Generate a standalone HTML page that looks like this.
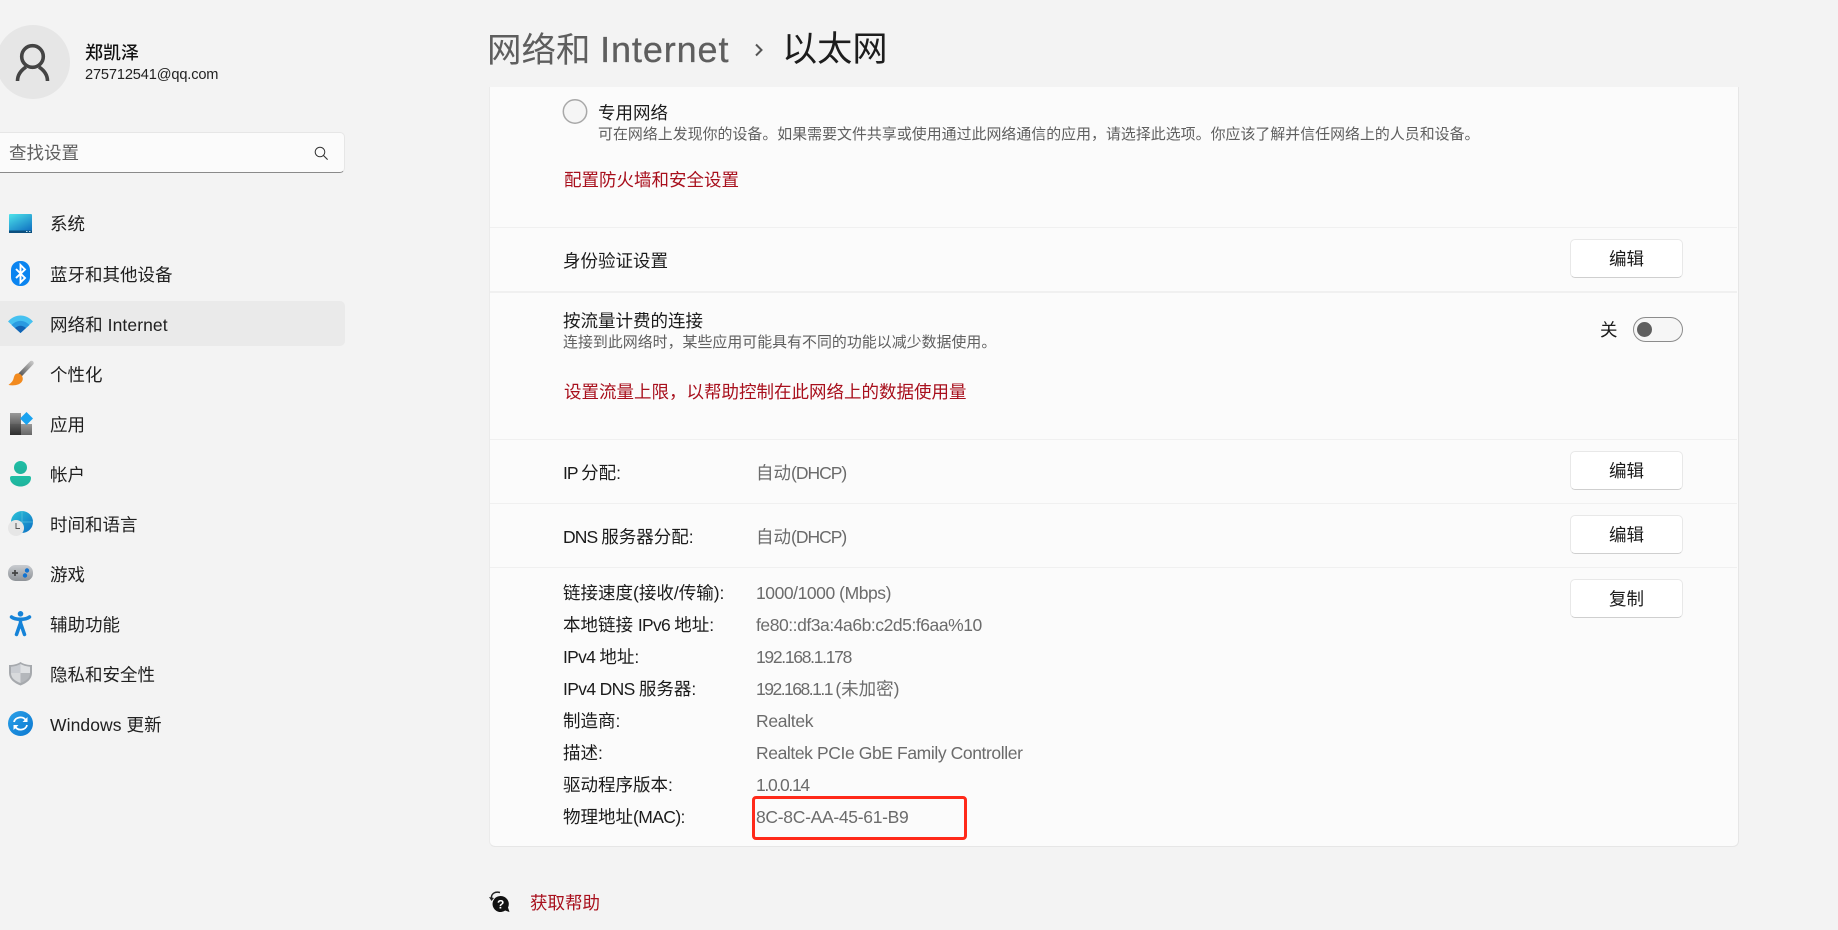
<!DOCTYPE html>
<html lang="zh-CN">
<head>
<meta charset="utf-8">
<title>设置</title>
<style>
html,body{margin:0;padding:0;width:1838px;height:930px;overflow:hidden;background:#f3f3f3;}
body{position:relative;font-family:"Liberation Sans","Noto Sans CJK SC",sans-serif;color:#1b1b1b;}
.t{position:absolute;white-space:nowrap;line-height:24px;height:24px;font-size:17.5px;}
.d{font-size:14.9px;letter-spacing:.05px;color:#5f5f5f;}
.v{color:#6b6b6b;}
.l{color:#a80f1c;}
.n{left:50px;color:#202020;}
.b{position:absolute;left:1570px;width:111px;height:37px;background:#fff;border:1px solid #e8e8e8;border-bottom-color:#cfcfcf;border-radius:5px;text-align:center;line-height:39px;font-size:17.5px;color:#1b1b1b;}
.hr{position:absolute;left:490px;width:1247px;height:1px;background:#f0f0f0;}
svg{position:absolute;overflow:visible;}
</style>
</head>
<body>
<!-- avatar -->
<div style="position:absolute;left:-4px;top:25px;width:74px;height:74px;border-radius:50%;background:#e6e6e6;"></div>
<svg style="left:0;top:0" width="70" height="100"><circle cx="32.500" cy="56.500" r="10.800" fill="none" stroke="#444" stroke-width="3.600"/><path d="M17.500 81C17.500 74 21.500 70 26 67M47.500 81C47.500 74 43.500 70 39 67" fill="none" stroke="#444" stroke-width="3.600"/></svg>
<div class="t" style="left:85px;top:41px;font-size:18px;font-weight:500;color:#111;">郑凯泽</div>
<div class="t" style="left:85px;top:63px;font-size:14.6px;letter-spacing:-.15px;color:#222;">275712541@qq.com</div>

<!-- search -->
<div style="position:absolute;left:-6px;top:132px;width:349px;height:39px;background:#fbfbfb;border:1px solid #e6e6e6;border-bottom:1.5px solid #8a8a8a;border-radius:5px;"></div>
<div class="t" style="left:9px;top:141px;color:#5f5f5f;">查找设置</div>
<svg style="left:314px;top:146px" width="16" height="16"><circle cx="6" cy="6" r="4.800" fill="none" stroke="#333" stroke-width="1"/><path d="M9.600 9.600l4 4" stroke="#333" stroke-width="1.100"/></svg>

<!-- nav -->
<div style="position:absolute;left:-6px;top:301px;width:351px;height:45px;background:#eaeaea;border-radius:5px;"></div>
<svg width="0" height="0" style="left:0;top:0"><defs>
<linearGradient id="g1" x1="0" y1="0" x2=".6" y2="1"><stop offset="0" stop-color="#4de3ea"/><stop offset="1" stop-color="#1478c4"/></linearGradient>
<linearGradient id="g2" x1="0" y1="0" x2="0" y2="1"><stop offset="0" stop-color="#1fbfa5"/><stop offset="1" stop-color="#1fb29c"/></linearGradient>
<linearGradient id="g3" x1="0" y1="0" x2="1" y2="1"><stop offset="0" stop-color="#2bc4d8"/><stop offset="1" stop-color="#0d6fc4"/></linearGradient>
<linearGradient id="g4" x1="0" y1="0" x2="1" y2="1"><stop offset="0" stop-color="#2aa0e8"/><stop offset="1" stop-color="#0c78d0"/></linearGradient>
<linearGradient id="g5" gradientUnits="userSpaceOnUse" x1="11" y1="15" x2="24" y2="1"><stop offset="0" stop-color="#4f4f4f"/><stop offset="1" stop-color="#c4c4c4"/></linearGradient>
<linearGradient id="g6" x1="0" y1="0" x2="0" y2="1"><stop offset="0" stop-color="#c9ccd0"/><stop offset="1" stop-color="#8e9297"/></linearGradient>
<linearGradient id="g7" x1="0" y1="0" x2="0" y2="1"><stop offset="0" stop-color="#9a9a9a"/><stop offset="1" stop-color="#666"/></linearGradient>
<linearGradient id="g8" x1="0" y1="0" x2="0" y2="1"><stop offset="0" stop-color="#5c5c5c"/><stop offset="1" stop-color="#2e2e2e"/></linearGradient>
</defs></svg>

<svg style="left:9px;top:214px" width="24" height="20"><rect width="23" height="19" rx="1" fill="url(#g1)"/><rect y="16.500" width="23" height="2.500" fill="#0c4f7e"/><rect x="17" y="17" width="1.500" height="1" fill="#bde"/><rect x="20" y="17" width="1.500" height="1" fill="#bde"/></svg>
<div class="t n" style="top:212px;">系统</div>

<svg style="left:11px;top:261px" width="20" height="26"><rect width="19" height="25" rx="9" fill="#0a84f0"/><path d="M5 8l9 9-4.500 4.500V4L14 8.500 5 17" fill="none" stroke="#fff" stroke-width="1.900"/></svg>
<div class="t n" style="top:263px;">蓝牙和其他设备</div>

<svg style="left:8px;top:315px" width="26" height="19"><path d="M0 6.500C7-1.500 18-1.500 25 6.500L12.500 18z" fill="#46c1f0"/><path d="M3.500 10C9 4.500 16 4.500 21.500 10L12.500 18z" fill="#2a9ae0"/><path d="M7 13c3.500-3 7.500-3 11 0L12.500 18z" fill="#1264b4"/></svg>
<div class="t n" style="top:313px;letter-spacing:.08px;">网络和 Internet</div>

<svg style="left:8px;top:361px" width="26" height="26"><path d="M23.500 2L12 14" stroke="url(#g5)" stroke-width="4.500" stroke-linecap="round" fill="none"/><path d="M10 12.500c-4.500 0-3.500 4.500-5.500 7.500-1 1.500-3 3-4 4 6 1 12 0 14-4.500 1.200-3.500-1.500-7-4.500-7z" fill="#f28a1e"/></svg>
<div class="t n" style="top:363px;">个性化</div>

<svg style="left:10px;top:412px" width="24" height="24"><rect y="1" width="11" height="11" fill="url(#g7)"/><rect y="12" width="11" height="11" fill="url(#g8)"/><rect x="11" y="12" width="11" height="11" fill="url(#g7)"/><path d="M16.500 0l6.500 6.500-6.500 6.500-6.500-6.500z" fill="#1aa3f0"/></svg>
<div class="t n" style="top:413px;">应用</div>

<svg style="left:10px;top:461px" width="22" height="26"><circle cx="10.500" cy="6.500" r="6.500" fill="url(#g2)"/><path d="M2 15h17a2 2 0 0 1 2 2c0 5-5 8.500-10.500 8.500S0 22 0 17a2 2 0 0 1 2-2z" fill="url(#g2)"/></svg>
<div class="t n" style="top:463px;">帐户</div>

<svg style="left:8px;top:511px" width="26" height="26"><circle cx="14" cy="11" r="11" fill="url(#g3)"/><path d="M3 11h22M14 0v22" stroke="#7fd6e8" stroke-width=".7" opacity=".6"/><circle cx="8" cy="17" r="8" fill="#e6e6e6"/><path d="M8 12v5.500h4" fill="none" stroke="#555" stroke-width="1"/></svg>
<div class="t n" style="top:513px;">时间和语言</div>

<svg style="left:8px;top:565px" width="26" height="17"><rect width="25" height="16" rx="7.500" fill="url(#g6)"/><path d="M4 8h6M7 5v6" stroke="#444" stroke-width="1.700"/><circle cx="19" cy="5.500" r="2.200" fill="#1273d0"/><circle cx="17" cy="10.500" r="2.200" fill="#1273d0"/></svg>
<div class="t n" style="top:563px;">游戏</div>

<svg style="left:10px;top:611px" width="22" height="26"><circle cx="10.500" cy="2.800" r="2.800" fill="#1583d8"/><path d="M1.500 6C5 9 16 9 19.500 6M10.500 8.500v4M10.500 12l-4 11.500M10.500 12l4 11.500" fill="none" stroke="#1583d8" stroke-width="3.500" stroke-linecap="round"/></svg>
<div class="t n" style="top:613px;">辅助功能</div>

<svg style="left:9px;top:662px" width="24" height="24"><path d="M11.500 0c3 2 7 3 11.500 3v8c0 6-5 10-11.500 12.500C5 21 0 17 0 11V3c4.500 0 8.500-1 11.500-3z" fill="#a6a9ad"/><path d="M11.500 2C9 3.500 5.500 4.500 2 4.700V11h9.500z" fill="#c9ccd1"/><path d="M11.500 2c2.500 1.500 6 2.500 9.500 2.700V11h-9.500z" fill="#dfe1e3"/><path d="M2 11h9.500v10C6 19 2 16 2 11z" fill="#d8dadc"/><path d="M21 11h-9.500v10c5.500-2 9.500-5 9.500-10z" fill="#b4b7bb"/></svg>
<div class="t n" style="top:663px;">隐私和安全性</div>

<svg style="left:8px;top:711px" width="26" height="26"><circle cx="12.500" cy="12.500" r="12.500" fill="url(#g4)"/><path d="M6 11c1-5 9-6.500 12-1.500M19 14c-1 5-9 6.500-12 1.500" fill="none" stroke="#fff" stroke-width="1.800"/><path d="M19.500 6v5h-5zM5.500 19v-5h5z" fill="#fff"/></svg>
<div class="t n" style="top:713px;letter-spacing:.08px;">Windows 更新</div>

<!-- title -->
<div class="t" style="left:487px;top:25px;height:50px;line-height:50px;font-size:34.5px;color:#5e5e5e;">网络和 <span style="font-size:36px;letter-spacing:.9px;-webkit-text-stroke:.3px #5e5e5e;">Internet</span></div>
<svg style="left:754px;top:43px" width="10" height="14"><path d="M2 1.500l5.500 5.500L2 12.500" fill="none" stroke="#555" stroke-width="2"/></svg>
<div class="t" style="left:782px;top:25px;height:50px;line-height:50px;font-size:35.2px;color:#1d1d1d;">以太网</div>

<!-- card -->
<div style="position:absolute;left:489px;top:87px;width:1248px;height:759px;background:#fbfbfb;border-left:1px solid #ebebeb;border-right:1px solid #e6e6e6;border-bottom:1px solid #e6e6e6;border-radius:0 0 6px 6px;"></div>
<div class="hr" style="top:227px;"></div>
<div class="hr" style="top:291px;height:2px;"></div>
<div class="hr" style="top:439px;"></div>
<div class="hr" style="top:503px;"></div>
<div class="hr" style="top:567px;"></div>

<svg style="left:563px;top:99px" width="26" height="26"><circle cx="12" cy="12.500" r="11.700" fill="#f5f5f5" stroke="#a8a8a8" stroke-width="1.500"/></svg>
<div class="t" style="left:598px;top:101px;">专用网络</div>
<div class="t d" style="left:598px;top:123px;">可在网络上发现你的设备。如果需要文件共享或使用通过此网络通信的应用，请选择此选项。你应该了解并信任网络上的人员和设备。</div>
<div class="t l" style="left:564px;top:168px;">配置防火墙和安全设置</div>

<div class="t" style="left:563px;top:249px;">身份验证设置</div>
<div class="b" style="top:239px;">编辑</div>

<div class="t" style="left:563px;top:309px;">按流量计费的连接</div>
<div class="t d" style="left:563px;top:331px;">连接到此网络时，某些应用可能具有不同的功能以减少数据使用。</div>
<div class="t" style="left:1600px;top:318px;">关</div>
<div style="position:absolute;left:1633px;top:317px;width:48px;height:23px;border:1px solid #8c8c8c;border-radius:13px;background:#f6f6f6;"></div>
<div style="position:absolute;left:1637px;top:322px;width:15px;height:15px;border-radius:50%;background:#5f5f5f;"></div>
<div class="t l" style="left:564px;top:380px;">设置流量上限，以帮助控制在此网络上的数据使用量</div>

<div class="t" style="left:563px;top:461px;"><span style="letter-spacing:-1px">IP </span>分配:</div>
<div class="t v" style="left:756px;top:461px;">自动<span style="letter-spacing:-1px">(DHCP)</span></div>
<div class="b" style="top:451px;">编辑</div>

<div class="t" style="left:563px;top:525px;"><span style="letter-spacing:-.9px">DNS </span>服务器分配:</div>
<div class="t v" style="left:756px;top:525px;">自动<span style="letter-spacing:-1px">(DHCP)</span></div>
<div class="b" style="top:515px;">编辑</div>
<div class="b" style="top:579px;">复制</div>

<div class="t" style="left:563px;top:581px;">链接速度(接收/传输):</div>
<div class="t v" style="left:756px;top:581px;letter-spacing:-.44px;">1000/1000 (Mbps)</div>
<div class="t" style="left:563px;top:613px;">本地链接 <span style="letter-spacing:-.7px">IPv6 </span>地址:</div>
<div class="t v" style="left:756px;top:613px;letter-spacing:-.45px;">fe80::df3a:4a6b:c2d5:f6aa%10</div>
<div class="t" style="left:563px;top:645px;"><span style="letter-spacing:-.7px">IPv4 </span>地址:</div>
<div class="t v" style="left:756px;top:645px;letter-spacing:-1.300px;">192.168.1.178</div>
<div class="t" style="left:563px;top:677px;"><span style="letter-spacing:-.65px">IPv4 DNS </span>服务器:</div>
<div class="t v" style="left:756px;top:677px;"><span style="letter-spacing:-1.500px">192.168.1.1 </span>(未加密)</div>
<div class="t" style="left:563px;top:709px;">制造商:</div>
<div class="t v" style="left:756px;top:709px;letter-spacing:-.3px;">Realtek</div>
<div class="t" style="left:563px;top:741px;">描述:</div>
<div class="t v" style="left:756px;top:741px;letter-spacing:-.4px;">Realtek PCIe GbE Family Controller</div>
<div class="t" style="left:563px;top:773px;">驱动程序版本:</div>
<div class="t v" style="left:756px;top:773px;letter-spacing:-1.300px;">1.0.0.14</div>
<div class="t" style="left:563px;top:805px;">物理地址<span style="letter-spacing:-.6px">(MAC):</span></div>
<div class="t v" style="left:756px;top:805px;letter-spacing:-.3px;">8C-8C-AA-45-61-B9</div>
<div style="position:absolute;left:752px;top:796px;width:209px;height:38px;border:3px solid #ff2a1a;border-radius:4px;"></div>

<!-- help -->
<svg style="left:489px;top:889px" width="22" height="24"><path d="M2.500 9C2 5 6 2 11 3.500" fill="none" stroke="#222" stroke-width="1.500"/><path d="M0 8l2.500 4 2.500-3z" fill="#222"/><path d="M11.700 7a8 8 0 1 0 4.500 14.500l4.300 1.500-1.500-4.500A8 8 0 0 0 11.700 7z" fill="#111"/><text x="11.700" y="19.500" font-size="12" font-weight="bold" fill="#fff" text-anchor="middle" font-family="Liberation Sans">?</text></svg>
<div class="t l" style="left:530px;top:891px;">获取帮助</div>
</body>
</html>
